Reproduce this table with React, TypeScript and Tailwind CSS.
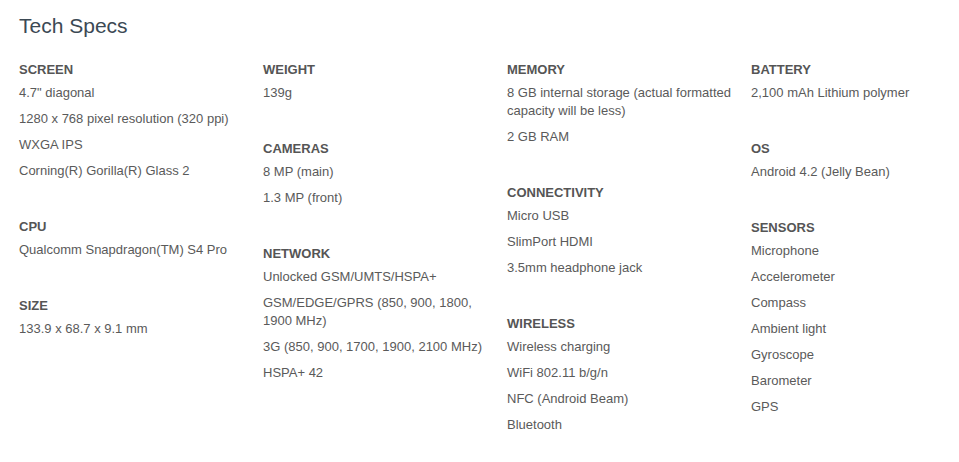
import React from "react";

type Section = { title: string; items: string[] };

const columns: Section[][] = [
  [
    {
      title: "SCREEN",
      items: [
        '4.7" diagonal',
        "1280 x 768 pixel resolution (320 ppi)",
        "WXGA IPS",
        "Corning(R) Gorilla(R) Glass 2",
      ],
    },
    { title: "CPU", items: ["Qualcomm Snapdragon(TM) S4 Pro"] },
    { title: "SIZE", items: ["133.9 x 68.7 x 9.1 mm"] },
  ],
  [
    { title: "WEIGHT", items: ["139g"] },
    { title: "CAMERAS", items: ["8 MP (main)", "1.3 MP (front)"] },
    {
      title: "NETWORK",
      items: [
        "Unlocked GSM/UMTS/HSPA+",
        "GSM/EDGE/GPRS (850, 900, 1800, 1900 MHz)",
        "3G (850, 900, 1700, 1900, 2100 MHz)",
        "HSPA+ 42",
      ],
    },
  ],
  [
    {
      title: "MEMORY",
      items: [
        "8 GB internal storage (actual formatted capacity will be less)",
        "2 GB RAM",
      ],
    },
    {
      title: "CONNECTIVITY",
      items: ["Micro USB", "SlimPort HDMI", "3.5mm headphone jack"],
    },
    {
      title: "WIRELESS",
      items: [
        "Wireless charging",
        "WiFi 802.11 b/g/n",
        "NFC (Android Beam)",
        "Bluetooth",
      ],
    },
  ],
  [
    { title: "BATTERY", items: ["2,100 mAh Lithium polymer"] },
    { title: "OS", items: ["Android 4.2 (Jelly Bean)"] },
    {
      title: "SENSORS",
      items: [
        "Microphone",
        "Accelerometer",
        "Compass",
        "Ambient light",
        "Gyroscope",
        "Barometer",
        "GPS",
      ],
    },
  ],
];

export default function App() {
  return (
    <div
      className="min-h-[462px] w-full overflow-hidden bg-white pl-[19px] pt-[14px]"
      style={{ fontFamily: '"Liberation Sans", Arial, sans-serif' }}
    >
      <h2 className="mb-[23px] text-[21px] leading-[24px] font-normal text-[#3b4954]">
        Tech Specs
      </h2>
      <div className="grid grid-cols-[228px_228px_228px_1fr] gap-x-4">
        {columns.map((col, ci) => (
          <div key={ci} className="flex flex-col">
            {col.map((s) => (
              <div key={s.title} className="mb-[30px]">
                <h3 className="mb-[5px] text-[13px] leading-[18px] font-bold text-[#555555]">
                  {s.title}
                </h3>
                <ul>
                  {s.items.map((it) => (
                    <li
                      key={it}
                      className="mb-[8px] text-[13px] leading-[18px] text-[#5a5a5a]"
                    >
                      {it}
                    </li>
                  ))}
                </ul>
              </div>
            ))}
          </div>
        ))}
      </div>
    </div>
  );
}
